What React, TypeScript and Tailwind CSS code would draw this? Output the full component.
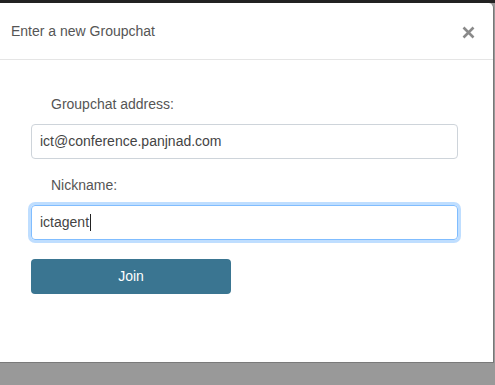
export default function App() {
  return (
    <div className="flex h-[385px] w-[495px] flex-col overflow-hidden bg-[#999] font-['Liberation_Sans',Arial,sans-serif]">
      <div className="h-[3px] flex-none bg-[#222]" />

      {/* Modal */}
      <div className="h-[359px] w-[494px] flex-none rounded-tr-[5px] border-r border-[#777] bg-white shadow-[0_1px_0_#7a7a7a]">
        <div className="flex h-[57px] items-center justify-between border-b border-[#e5e5e5] pl-[11px] pr-[18px]">
          <h4 className="text-[14px] text-[#555]">Enter a new Groupchat</h4>
          <svg width="13" height="13" viewBox="0 0 13 13" className="mt-[3px]">
            <path d="M1.5 1.5 L11.5 11.5 M11.5 1.5 L1.5 11.5" stroke="#8a8a8a" strokeWidth="2.6" />
          </svg>
        </div>

        <div className="pl-[31px] pt-[34px]">
          <label className="block pl-[20px] text-[14px] leading-[20px] text-[#555]">Groupchat address:</label>
          <div className="mt-[10px] flex h-[35px] w-[427px] items-center rounded-[4px] border border-[#ced4da] px-[8px] text-[14px] text-[#444]">
            ict@conference.panjnad.com
          </div>

          <label className="mt-[16px] block pl-[20px] text-[14px] leading-[20px] text-[#555]">Nickname:</label>
          <div className="mt-[10px] flex h-[35px] w-[427px] items-center rounded-[4px] border border-[#80bdff] px-[8px] text-[14px] text-[#444] shadow-[0_0_0_3px_rgba(0,123,255,0.25)]">
            ictagent
            <span className="ml-px inline-block h-[17px] w-px bg-[#222]" />
          </div>

          <button className="mt-[19px] flex h-[35px] w-[200px] items-center justify-center rounded-[4px] bg-[#3a7591] text-[14px] text-white">
            Join
          </button>
        </div>
      </div>
    </div>
  );
}
